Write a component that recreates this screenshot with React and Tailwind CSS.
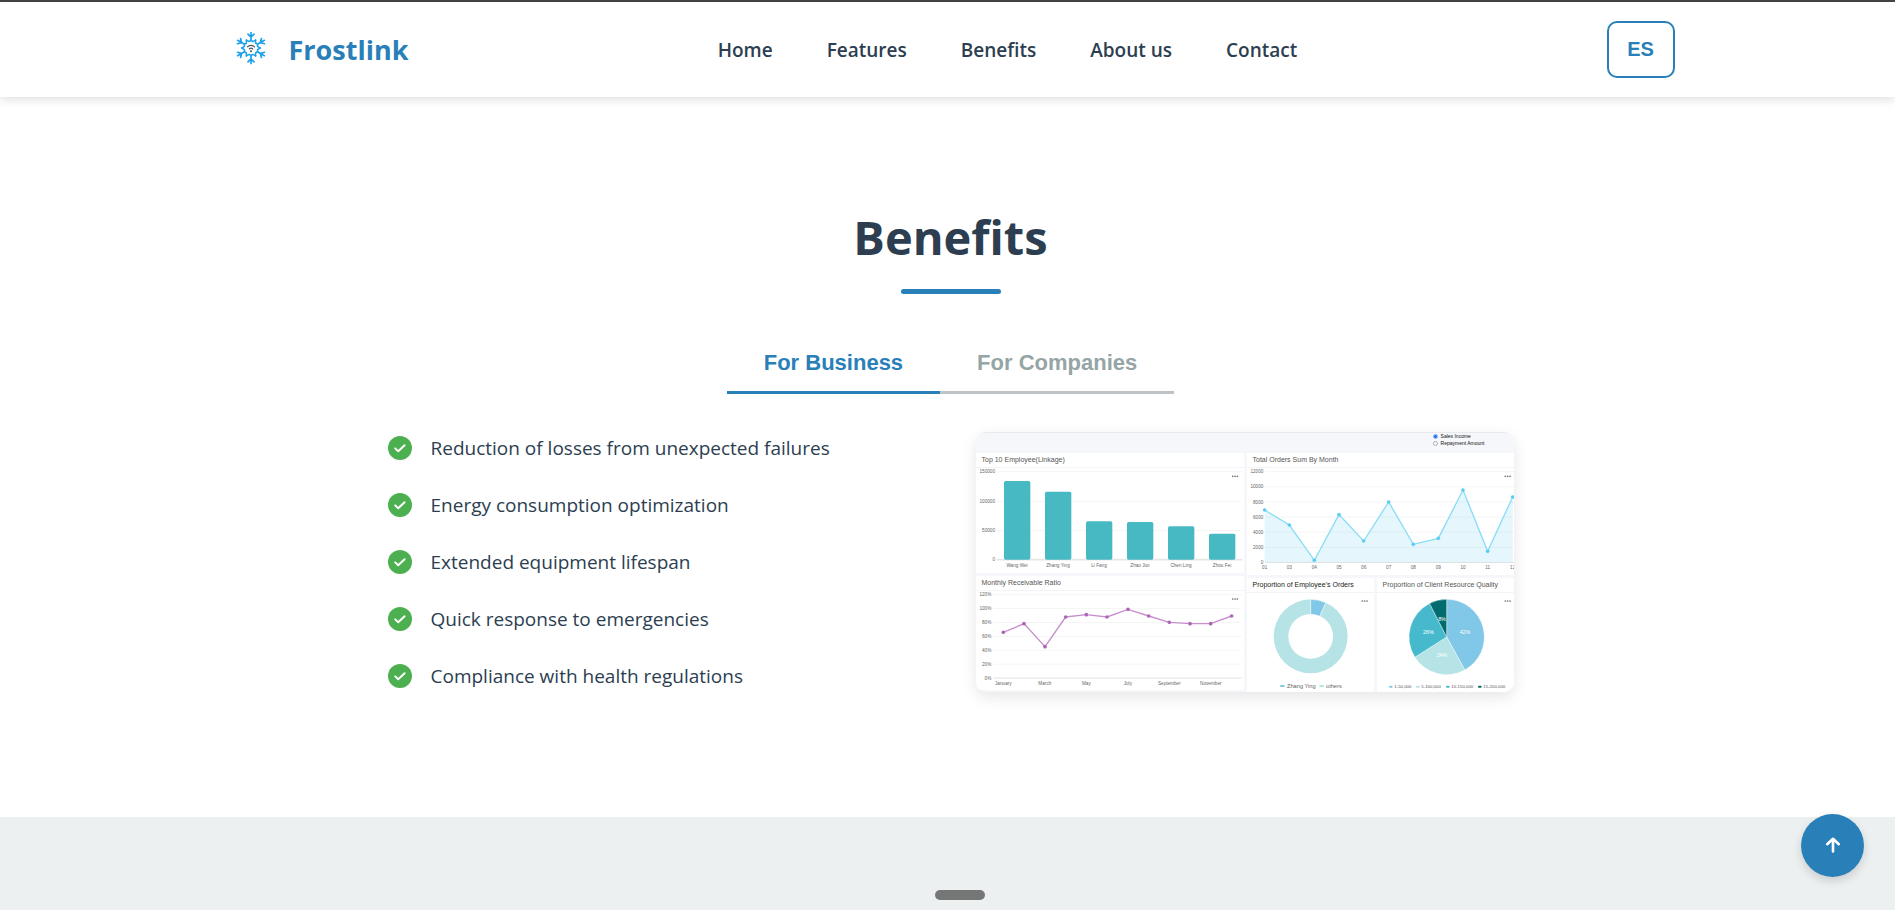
import { useState } from "react";

const NAV = ["Home", "Features", "Benefits", "About us", "Contact"];

const BENEFITS = [
  "Reduction of losses from unexpected failures",
  "Energy consumption optimization",
  "Extended equipment lifespan",
  "Quick response to emergencies",
  "Compliance with health regulations",
];

const TABS = ["For Business", "For Companies"];

function Snowflake() {
  return (
    <svg viewBox="0 0 40 40" className="size-10" fill="none" aria-hidden="true">
      <g stroke="#1ba1ec" strokeWidth="1.7" strokeLinecap="round" strokeLinejoin="round">
        {[0, 60, 120, 180, 240, 300].map((a) => (
          <g key={a} transform={`translate(0 -2) rotate(${a} 20 20)`}>
            <path d="M20 12.5V4.6M17 6.200l3 3 3-3" />
            <path d="M15.400 12.030L18.200 13.600L20 12.300L21.800 13.600L24.600 12.030" strokeWidth="1.5" />
          </g>
        ))}
      </g>
      <g stroke="#4b5563" strokeWidth="1.3" strokeLinecap="round">
        <path d="M16.6 16.8a5 5 0 0 1 6.8 0M18.3 18.9a2.6 2.6 0 0 1 3.4 0" />
      </g>
      <circle cx="20" cy="21.3" r="1" fill="#4b5563" />
    </svg>
  );
}

function CheckBadge() {
  return (
    <svg viewBox="0 0 24 24" className="size-6 shrink-0" aria-hidden="true">
      <circle cx="12" cy="12" r="12" fill="#4caf50" />
      <path d="M7.2 12.4l3 2.9 6.4-6" fill="none" stroke="#fff" strokeWidth="2" strokeLinecap="round" strokeLinejoin="round" />
    </svg>
  );
}

function Dots({ x, y }) {
  return (
    <g fill="#777">
      <circle cx={x - 7} cy={y} r="2.6" />
      <circle cx={x} cy={y} r="2.6" />
      <circle cx={x + 7} cy={y} r="2.6" />
    </g>
  );
}

function Panel({ title, dark, children }) {
  return (
    <section className="bg-white">
      <h3 className={`h-[15px] border-b border-[#f3f4f7] pl-1.5 text-[7px] leading-[14px] whitespace-nowrap ${dark ? "text-[#222]" : "text-[#555]"}`}>{title}</h3>
      {children}
    </section>
  );
}

const BARS = [
  ["Wang Wei", 168],
  ["Zhang Ying", 200],
  ["Li Fang", 289],
  ["Zhao Jun", 291],
  ["Chen Ling", 304],
  ["Zhou Fei", 326],
];

function BarChart() {
  return (
    <svg viewBox="18 129 804 315" className="block w-full" fontSize="14" fill="#666">
      {[["150000", 140], ["100000", 229], ["50000", 317], ["0", 404]].map(([t, y]) => (
        <g key={t}>
          <path d={`M80 ${y}H816`} stroke={t === "0" ? "#e6e6e6" : "#f5f5f5"} strokeWidth={t === "0" ? 5 : 3} />
          <text x="75" y={y + 5} textAnchor="end">{t}</text>
        </g>
      ))}
      {BARS.map(([name, top], i) => (
        <g key={name}>
          <rect x={102 + i * 123} y={top} width="79" height={404 - top} rx="5" fill="#47b9c2" />
          <text x={141 + i * 123} y="425" textAnchor="middle">{name}</text>
        </g>
      ))}
      <Dots x={795} y={154} />
    </svg>
  );
}

const ORDERS = [[74, 255], [148, 300], [223, 406], [297, 269], [371, 348], [446, 231], [520, 358], [595, 340], [669, 195], [743, 379], [818, 216]];
const MONTHS = ["01", "03", "04", "05", "06", "07", "08", "09", "10", "11", "12"];

function AreaChart() {
  const line = ORDERS.map((p) => p.join(" ")).join("L");
  return (
    <svg viewBox="21 129 801 321" className="block w-full" fontSize="14" fill="#666">
      {[12000, 10000, 8000, 6000, 4000, 2000, 0].map((v, i) => (
        <g key={v}>
          <path d={`M76 ${140 + i * 45.4}H822`} stroke={v === 0 ? "#e2e2e2" : "#f5f5f5"} strokeWidth="3" />
          <text x="70" y={145 + i * 45.4} textAnchor="end">{v}</text>
        </g>
      ))}
      <path d={`M74 412L${line}L818 412Z`} fill="#5dccf2" fillOpacity="0.16" />
      <path d={`M${line}`} fill="none" stroke="#8adcf6" strokeWidth="4" />
      {ORDERS.map(([x, y], i) => (
        <g key={x}>
          <circle cx={x} cy={y} r="5.5" fill="#5dccf2" />
          <text x={x} y="433" textAnchor="middle">{MONTHS[i]}</text>
        </g>
      ))}
      <Dots x={803} y={154} />
    </svg>
  );
}

const RATIO = [[100, 202], [162, 176], [225, 245], [287, 156], [349, 149], [411, 156], [474, 133], [536, 153], [598, 172], [660, 176], [722, 176], [785, 153]];

function LineChart() {
  return (
    <svg viewBox="18 78 804 297" className="block w-full" fontSize="14" fill="#666">
      {[120, 100, 80, 60, 40, 20, 0].map((v, i) => (
        <g key={v}>
          <path d={`M70 ${89 + i * 41.7}H815`} stroke={v === 0 ? "#e2e2e2" : "#f5f5f5"} strokeWidth="3" />
          <text x="64" y={94 + i * 41.7} textAnchor="end">{v}%</text>
        </g>
      ))}
      <path d={`M${RATIO.map((p) => p.join(" ")).join("L")}`} fill="none" stroke="#c78fcd" strokeWidth="4" />
      {RATIO.map(([x, y]) => (
        <circle key={x} cx={x} cy={y} r="5.5" fill="#ad66b5" />
      ))}
      {["January", "March", "May", "July", "September", "November"].map((m, i) => (
        <text key={m} x={100 + i * 124.5} y="360" textAnchor="middle">{m}</text>
      ))}
      <Dots x={795} y={102} />
    </svg>
  );
}

function slice(cx, cy, r, from, to) {
  const pt = (t) => `${cx + r * Math.sin(t * 2 * Math.PI)} ${cy - r * Math.cos(t * 2 * Math.PI)}`;
  return `M${cx} ${cy}L${pt(from)}A${r} ${r} 0 ${to - from > 0.5 ? 1 : 0} 1 ${pt(to)}Z`;
}

function Donut() {
  return (
    <svg viewBox="21 85 381 297" className="block w-full" fontSize="17" fill="#666">
      <circle cx="212" cy="215" r="111" fill="#b6e3e6" />
      <path d={slice(212, 215, 111, 0, 0.067)} fill="#80c7e8" stroke="#fff" strokeWidth="2" />
      <circle cx="212" cy="215" r="67" fill="#fff" />
      <rect x="120" y="361" width="14" height="6" rx="3" fill="#80c7e8" />
      <text x="141" y="370">Zhang Ying</text>
      <rect x="238" y="361" width="14" height="6" rx="3" fill="#b6e3e6" />
      <text x="258" y="370">others</text>
      <Dots x={374} y={109} />
    </svg>
  );
}

function Pie() {
  return (
    <svg viewBox="411 85 411 297" className="block w-full" fontSize="13" fill="#555">
      <g stroke="#fff" strokeOpacity="0.6" strokeWidth="2">
        <path d={slice(620, 217, 113, 0, 0.42)} fill="#80c7e8" />
        <path d={slice(620, 217, 113, 0.42, 0.66)} fill="#b6e3e6" />
        <path d={slice(620, 217, 113, 0.66, 0.925)} fill="#47b9cd" />
        <path d={slice(620, 217, 113, 0.925, 1)} fill="#026b6e" />
      </g>
      <g fill="#fff" fontSize="16" textAnchor="middle">
        <text x="675" y="209">42%</text>
        <text x="606" y="278">24%</text>
        <text x="565" y="209">26%</text>
        <text x="606" y="168">8%</text>
      </g>
      {[["1-50,000", 447, "#80c7e8"], ["5-100,000", 528, "#b6e3e6"], ["10-150,000", 618, "#47b9cd"], ["15-200,000", 714, "#026b6e"]].map(([t, x, c]) => (
        <g key={t}>
          <rect x={x} y="363" width="11" height="6" rx="3" fill={c} />
          <text x={x + 16} y="371">{t}</text>
        </g>
      ))}
      <Dots x={803} y={109} />
    </svg>
  );
}

function Dashboard() {
  const radio = "size-[5px] appearance-none rounded-full border border-[#aab] bg-white checked:border-[#8ab4ff] checked:bg-[#2f6fed]";
  return (
    <div className="overflow-hidden rounded-[10px] bg-[#f6f7fb] font-['Liberation_Sans',sans-serif] shadow-[0_5px_15px_rgba(0,0,0,0.1)]">
      <div className="flex h-[21px] justify-end border-t border-[#e8e9ec] pr-[29px]">
        <fieldset className="flex flex-col text-[5px] leading-[7px] text-[#111]">
          <label className="flex items-center gap-[3px]">
            <input type="radio" name="metric" defaultChecked className={radio} />
            Sales Income
          </label>
          <label className="flex items-center gap-[3px]">
            <input type="radio" name="metric" className={radio} />
            Repayment Amount
          </label>
        </fieldset>
      </div>
      <div className="grid grid-cols-[268fr_267fr] gap-[3px]">
        <div className="flex flex-col gap-[3px]">
          <Panel title="Top 10 Employee(Linkage)"><BarChart /></Panel>
          <Panel title="Monthly Receivable Ratio"><LineChart /></Panel>
        </div>
        <div className="flex flex-col gap-[3px]">
          <Panel title="Total Orders Sum By Month"><AreaChart /></Panel>
          <div className="grid grid-cols-[127fr_137fr] gap-[3px]">
            <Panel title="Proportion of Employee's Orders" dark><Donut /></Panel>
            <Panel title="Proportion of Client Resource Quality"><Pie /></Panel>
          </div>
        </div>
      </div>
    </div>
  );
}

export default function App() {
  const [tab, setTab] = useState(0);
  return (
    <div className="flex min-h-screen flex-col border-t-2 border-[#464445] bg-white font-['Open_Sans',sans-serif] text-[#2c3e50]">
      <header className="relative z-10 bg-white pl-1.5 shadow-[0_2px_10px_rgba(0,0,0,0.14)]">
        <div className="mx-auto flex h-[95px] max-w-[1448px] items-center justify-between">
          <a href="#home" className="flex items-center gap-[18px] pl-1">
            <Snowflake />
            <span className="text-[27px] leading-10 font-bold text-[#2980b9]">Frostlink</span>
          </a>
          <nav className="flex gap-[54px] text-[19px] leading-7 font-semibold">
            {NAV.map((n) => (
              <a key={n} href={`#${n.toLowerCase().replace(" ", "-")}`}>{n}</a>
            ))}
          </nav>
          <button type="button" className="h-[57px] w-[68px] rounded-[10px] border-2 border-[#2980b9] pb-0.5 font-['Liberation_Sans',sans-serif] text-[20px] font-bold text-[#2980b9]">ES</button>
        </div>
      </header>

      <main className="grow pb-[125px] pl-1.5" id="benefits">
        <div className="mx-auto flex max-w-[1126px] flex-col items-center pt-[108px]">
          <h2 className="text-[47px] leading-[64px] font-bold">Benefits</h2>
          <div className="mt-5 h-[5px] w-[100px] rounded-[3px] bg-[#2980b9]" />
          <div role="tablist" className="mt-10 flex font-['Liberation_Sans',sans-serif] text-[22px] leading-[25px] font-bold">
            {TABS.map((t, i) => (
              <button
                key={t}
                type="button"
                role="tab"
                aria-selected={tab === i}
                onClick={() => setTab(i)}
                className={`border-b-[3px] px-[37px] pt-4 pb-4 ${tab === i ? "border-[#2980b9] text-[#2980b9]" : "border-[#bdc3c7] text-[#95a5a6]"}`}
              >
                {t}
              </button>
            ))}
          </div>
          <div className="mt-[38px] grid w-full grid-cols-2 items-center gap-[50px]">
            <ul className="flex flex-col gap-[25px] text-[19px] leading-8">
              {BENEFITS.map((b) => (
                <li key={b} className="flex items-center gap-[19px]">
                  <CheckBadge />
                  {b}
                </li>
              ))}
            </ul>
            <Dashboard />
          </div>
        </div>
      </main>

      <footer className="flex h-[93px] items-end justify-center bg-[#ecf0f1] pb-[10px] pl-[25px]">
        <div className="h-[10px] w-[50px] rounded-full bg-[#757776]" />
      </footer>

      <button type="button" aria-label="Back to top" className="fixed right-[31px] bottom-[33px] z-20 flex size-[63px] items-center justify-center rounded-full bg-[#2980b9] pb-0.5 shadow-[0_4px_10px_rgba(0,0,0,0.15)]">
        <svg viewBox="0 0 16 16" className="size-4" fill="none" stroke="#fff" strokeWidth="2.6" strokeLinecap="round" strokeLinejoin="round" aria-hidden="true">
          <path d="M8 14.5V2M2.2 7.2L8 1.8l5.8 5.4" />
        </svg>
      </button>
    </div>
  );
}
